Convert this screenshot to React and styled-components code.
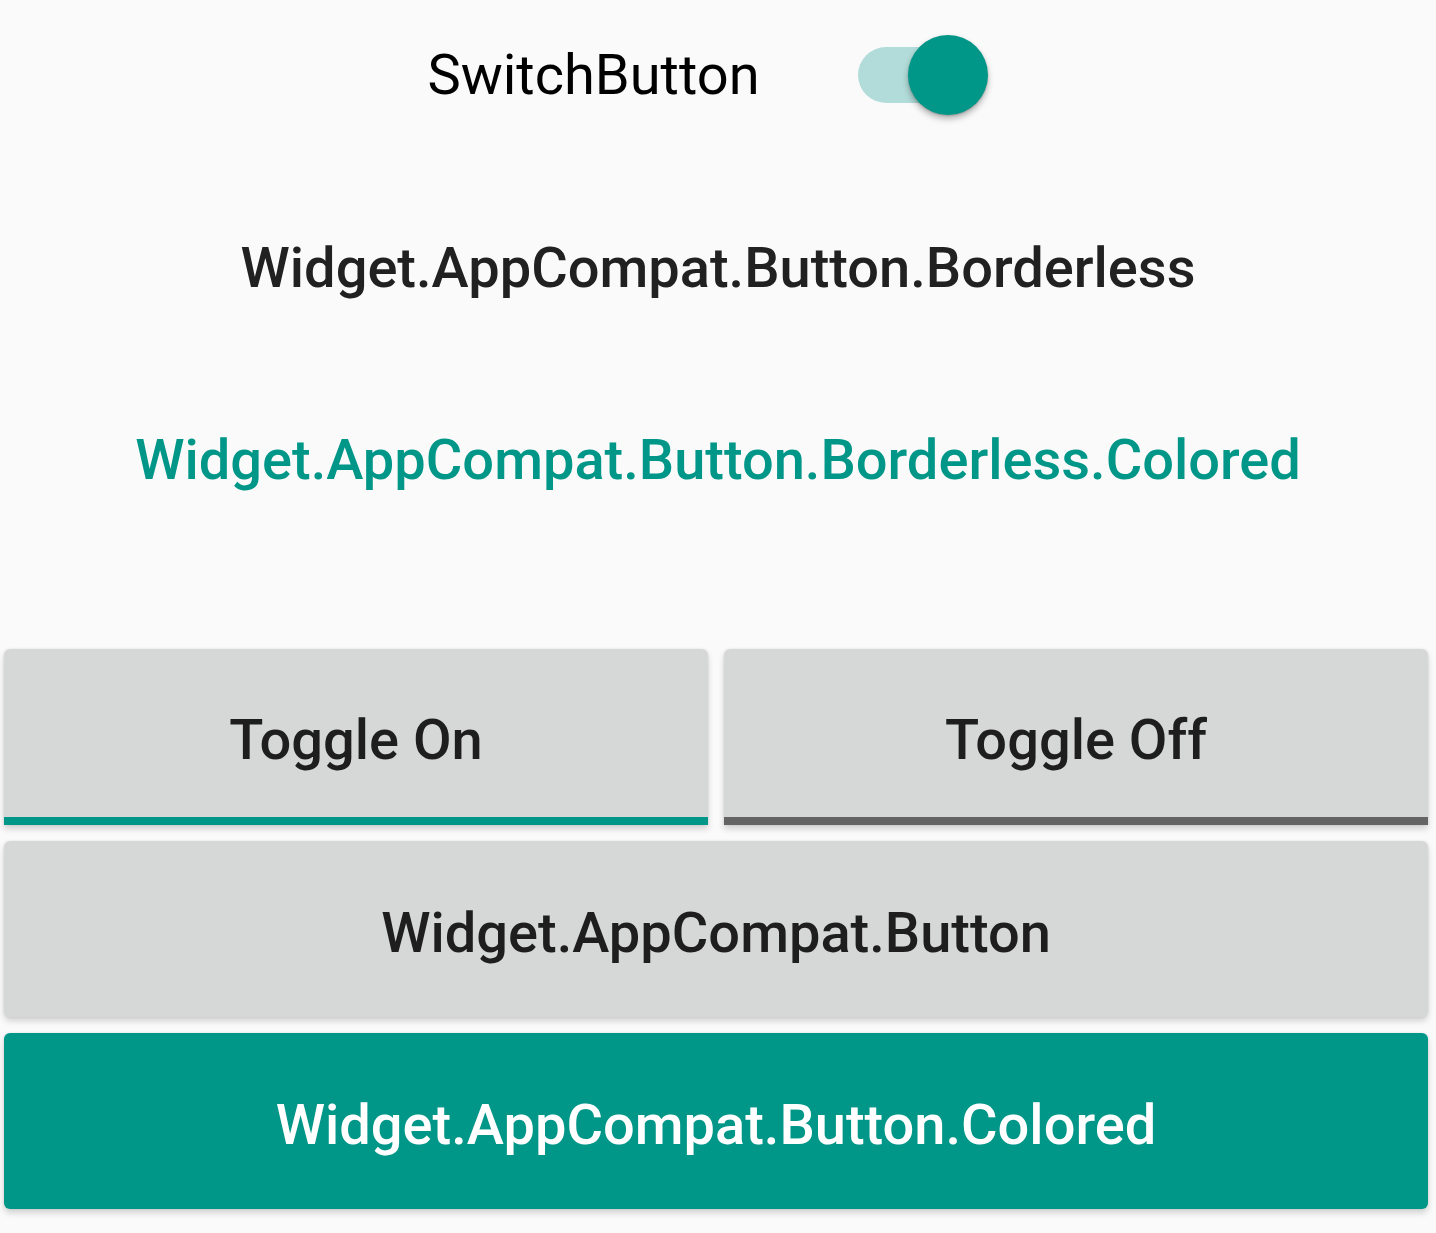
import React, { useState } from 'react'
import styled, { createGlobalStyle } from 'styled-components'

const GlobalStyle = createGlobalStyle`
  html, body {
    margin: 0;
    padding: 0;
    background: #fafafa;
  }
  body {
    font-family: Roboto, "Noto Sans", Arial, sans-serif;
  }
`

const Page = styled.div`
  width: 1436px;
  min-height: 1233px;
  background: #fafafa;
  display: flex;
  flex-direction: column;
`

const SwitchRow = styled.div`
  height: 150px;
  display: flex;
  align-items: center;
  justify-content: center;
  gap: 98px;
  padding-right: 21px;
  box-sizing: border-box;
`

const SwitchLabel = styled.span`
  font-size: 56px;
  font-weight: 400;
  color: #000;
`

const Track = styled.div`
  position: relative;
  width: 104px;
  height: 56px;
  border-radius: 28px;
  background: ${p => (p.on ? '#b2dcd9' : '#c8c8c8')};
  margin-right: 26px;
  cursor: pointer;
`

const Thumb = styled.div`
  position: absolute;
  top: -12px;
  left: ${p => (p.on ? '50px' : '-26px')};
  width: 80px;
  height: 80px;
  border-radius: 50%;
  background: ${p => (p.on ? '#009688' : '#f1f1f1')};
  box-shadow: 0 4px 6px rgba(0, 0, 0, 0.28), 0 1px 2px rgba(0, 0, 0, 0.18);
`

const BorderlessGroup = styled.div`
  display: flex;
  flex-direction: column;
  padding-top: 22px;
`

const BorderlessButton = styled.div`
  height: 192px;
  display: flex;
  align-items: center;
  justify-content: center;
  font-size: 56px;
  font-weight: 500;
  color: ${p => (p.colored ? '#009688' : '#212121')};
`

const Buttons = styled.div`
  display: flex;
  flex-direction: column;
  gap: 16px;
  padding: 93px 8px 0 4px;
`

const ToggleRow = styled.div`
  display: flex;
  gap: 16px;
`

const RaisedButton = styled.div`
  height: 176px;
  box-sizing: border-box;
  padding-top: 7px;
  display: flex;
  align-items: center;
  justify-content: center;
  border-radius: 6px;
  background: ${p => (p.colored ? '#009688' : '#d6d7d7')};
  color: ${p => (p.colored ? '#ffffff' : '#1e1e1e')};
  font-size: 56px;
  font-weight: 500;
  box-shadow: 0 4px 6px rgba(0, 0, 0, 0.16), 0 0 3px rgba(0, 0, 0, 0.08);
`

const ToggleButton = styled(RaisedButton)`
  flex: 1;
  border-bottom: 8px solid ${p => (p.checked ? '#009688' : '#646464')};
  border-radius: 6px 6px 0 0;
  padding-top: 14px;
`

export default function App() {
  const [on, setOn] = useState(true)

  return (
    <>
      <GlobalStyle />
      <Page>
        <SwitchRow>
          <SwitchLabel>SwitchButton</SwitchLabel>
          <Track on={on ? 1 : 0} onClick={() => setOn(!on)}>
            <Thumb on={on ? 1 : 0} />
          </Track>
        </SwitchRow>
        <BorderlessGroup>
          <BorderlessButton>Widget.AppCompat.Button.Borderless</BorderlessButton>
          <BorderlessButton colored={1}>Widget.AppCompat.Button.Borderless.Colored</BorderlessButton>
        </BorderlessGroup>
        <Buttons>
          <ToggleRow>
            <ToggleButton checked={1}>Toggle On</ToggleButton>
            <ToggleButton checked={0}>Toggle Off</ToggleButton>
          </ToggleRow>
          <RaisedButton>Widget.AppCompat.Button</RaisedButton>
          <RaisedButton colored={1}>Widget.AppCompat.Button.Colored</RaisedButton>
        </Buttons>
      </Page>
    </>
  )
}
